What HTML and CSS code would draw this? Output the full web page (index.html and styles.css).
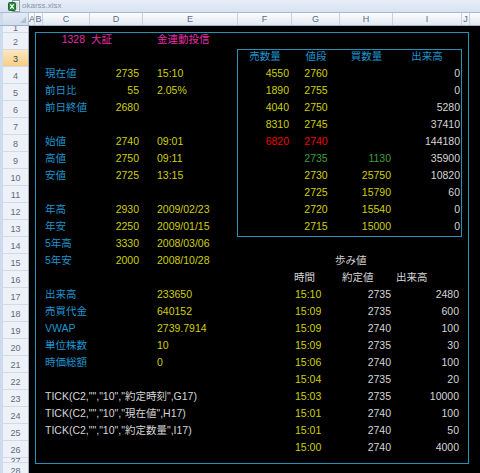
FILE: index.html
```html
<!DOCTYPE html>
<html lang="ja">
<head>
<meta charset="utf-8">
<title>okarss.xlsx</title>
<link rel="stylesheet" href="styles.css">
</head>
<body>
<div class="window">
  <div class="titlebar">
    <svg class="xlicon" viewBox="0 0 12 12" aria-hidden="true">
      <rect x="4.5" y="0.5" width="7" height="11" fill="#ffffff" stroke="#8a9bb0"/>
      <path d="M7.5 3h3M7.5 5h3M7.5 7h3M7.5 9h3" stroke="#7fb08a" stroke-width="0.8"/>
      <rect x="0.5" y="2.5" width="7" height="8" rx="1" fill="#2d8a3e" stroke="#1d6a2c"/>
      <path d="M2.3 4.3l3.4 4.4M5.7 4.3l-3.4 4.4" stroke="#ffffff" stroke-width="1.3"/>
    </svg>
    <span class="title">okarss.xlsx</span>
  </div>

  <div class="colheads">
    <div class="corner"><span class="tri"></span></div>
    <div class="ch">A</div>
    <div class="ch">B</div>
    <div class="ch">C</div>
    <div class="ch">D</div>
    <div class="ch">E</div>
    <div class="ch">F</div>
    <div class="ch">G</div>
    <div class="ch">H</div>
    <div class="ch">I</div>
    <div class="ch">J</div>
    <div class="ch last"></div>
  </div>

  <div class="main">
    <div class="rowheads">
      <div class="rh r1">1</div>
      <div class="rh">2</div>
      <div class="rh active">3</div>
      <div class="rh">4</div>
      <div class="rh">5</div>
      <div class="rh">6</div>
      <div class="rh">7</div>
      <div class="rh">8</div>
      <div class="rh">9</div>
      <div class="rh">10</div>
      <div class="rh">11</div>
      <div class="rh">12</div>
      <div class="rh">13</div>
      <div class="rh">14</div>
      <div class="rh">15</div>
      <div class="rh">16</div>
      <div class="rh">17</div>
      <div class="rh">18</div>
      <div class="rh">19</div>
      <div class="rh">20</div>
      <div class="rh">21</div>
      <div class="rh">22</div>
      <div class="rh">23</div>
      <div class="rh">24</div>
      <div class="rh">25</div>
      <div class="rh">26</div>
      <div class="rh r27">27</div>
      <div class="rh r28">28</div>
    </div>

    <div class="sheet">
      <div class="panel">
        <div class="body">
          <div class="left">
            <div class="row"><span class="c mag code">1328</span><span class="d mag mkt">大証</span><span class="e mag">金連動投信</span></div>
            <div class="row"></div>
            <div class="row"><span class="c lbl">現在値</span><span class="d num">2735</span><span class="e num">15:10</span></div>
            <div class="row"><span class="c lbl">前日比</span><span class="d num">55</span><span class="e num">2.05%</span></div>
            <div class="row"><span class="c lbl">前日終値</span><span class="d num">2680</span></div>
            <div class="row"></div>
            <div class="row"><span class="c lbl">始値</span><span class="d num">2740</span><span class="e num">09:01</span></div>
            <div class="row"><span class="c lbl">高値</span><span class="d num">2750</span><span class="e num">09:11</span></div>
            <div class="row"><span class="c lbl">安値</span><span class="d num">2725</span><span class="e num">13:15</span></div>
            <div class="row"></div>
            <div class="row"><span class="c lbl">年高</span><span class="d num">2930</span><span class="e num">2009/02/23</span></div>
            <div class="row"><span class="c lbl">年安</span><span class="d num">2250</span><span class="e num">2009/01/15</span></div>
            <div class="row"><span class="c lbl">5年高</span><span class="d num">3330</span><span class="e num">2008/03/06</span></div>
            <div class="row"><span class="c lbl">5年安</span><span class="d num">2000</span><span class="e num">2008/10/28</span></div>
            <div class="row"></div>
            <div class="row"><span class="c lbl">出来高</span><span class="e num">233650</span></div>
            <div class="row"><span class="c lbl">売買代金</span><span class="e num">640152</span></div>
            <div class="row"><span class="c lbl">VWAP</span><span class="e num">2739.7914</span></div>
            <div class="row"><span class="c lbl">単位株数</span><span class="e num">10</span></div>
            <div class="row"><span class="c lbl">時価総額</span><span class="e num">0</span></div>
            <div class="row"></div>
            <div class="row"><span class="span wht">TICK(C2,"","10","約定時刻",G17)</span></div>
            <div class="row"><span class="span wht">TICK(C2,"","10","現在値",H17)</span></div>
            <div class="row"><span class="span wht">TICK(C2,"","10","約定数量",I17)</span></div>
          </div>

          <div class="right">
            <div class="rspacer"></div>
            <div class="book">
              <div class="row hd"><span class="f lbl">売数量</span><span class="g lbl">値段</span><span class="h lbl">買数量</span><span class="i lbl">出来高</span></div>
              <div class="row"><span class="f num">4550</span><span class="g num">2760</span><span class="i wht">0</span></div>
              <div class="row"><span class="f num">1890</span><span class="g num">2755</span><span class="i wht">0</span></div>
              <div class="row"><span class="f num">4040</span><span class="g num">2750</span><span class="i wht">5280</span></div>
              <div class="row"><span class="f num">8310</span><span class="g num">2745</span><span class="i wht">37410</span></div>
              <div class="row"><span class="f red">6820</span><span class="g red">2740</span><span class="i wht">144180</span></div>
              <div class="row"><span class="g grn">2735</span><span class="h grn">1130</span><span class="i wht">35900</span></div>
              <div class="row"><span class="g num">2730</span><span class="h num">25750</span><span class="i wht">10820</span></div>
              <div class="row"><span class="g num">2725</span><span class="h num">15790</span><span class="i wht">60</span></div>
              <div class="row"><span class="g num">2720</span><span class="h num">15540</span><span class="i wht">0</span></div>
              <div class="row"><span class="g num">2715</span><span class="h num">15000</span><span class="i wht">0</span></div>
            </div>

            <div class="ticks">
              <div class="row"></div>
              <div class="row caption"><span class="wht">歩み値</span></div>
              <div class="row thd"><span class="tg wht">時間</span><span class="th wht">約定値</span><span class="ti wht">出来高</span></div>
              <div class="row"><span class="tg num">15:10</span><span class="th wht">2735</span><span class="ti wht">2480</span></div>
              <div class="row"><span class="tg num">15:09</span><span class="th wht">2735</span><span class="ti wht">600</span></div>
              <div class="row"><span class="tg num">15:09</span><span class="th wht">2740</span><span class="ti wht">100</span></div>
              <div class="row"><span class="tg num">15:09</span><span class="th wht">2735</span><span class="ti wht">30</span></div>
              <div class="row"><span class="tg num">15:06</span><span class="th wht">2740</span><span class="ti wht">100</span></div>
              <div class="row"><span class="tg num">15:04</span><span class="th wht">2735</span><span class="ti wht">20</span></div>
              <div class="row"><span class="tg num">15:03</span><span class="th wht">2735</span><span class="ti wht">10000</span></div>
              <div class="row"><span class="tg num">15:01</span><span class="th wht">2740</span><span class="ti wht">100</span></div>
              <div class="row"><span class="tg num">15:01</span><span class="th wht">2740</span><span class="ti wht">50</span></div>
              <div class="row"><span class="tg num">15:00</span><span class="th wht">2740</span><span class="ti wht">4000</span></div>
            </div>
          </div>
        </div>
      </div>
    </div>
  </div>
</div>
</body>
</html>
```

FILE: styles.css
```css
* { box-sizing: border-box; }

html, body {
  margin: 0;
  padding: 0;
}

body {
  width: 480px;
  height: 473px;
  overflow: hidden;
  background: #000;
  font-family: "Liberation Sans", "Noto Sans CJK JP", sans-serif;
}

.window {
  width: 480px;
  height: 473px;
  display: flex;
  flex-direction: column;
  overflow: hidden;
}

/* title bar */
.titlebar {
  height: 13px;
  flex: none;
  display: flex;
  align-items: center;
  gap: 2px;
  padding-left: 8px;
  background: linear-gradient(#e8eef8, #d7e2f2);
  border-bottom: 1px solid #a9bad2;
}

.xlicon {
  width: 12px;
  height: 12px;
  display: block;
}

.title {
  font-size: 8px;
  line-height: 10px;
  color: #8a96a9;
}

/* column headers */
.colheads {
  height: 13px;
  flex: none;
  display: grid;
  grid-template-columns: 29px 6px 8px 47px 53px 95px 54px 48px 53px 69px 8px 10px;
  background: linear-gradient(#fbfcfe, #e2e8f1);
  border-bottom: 1px solid #9fb1c9;
}

.corner {
  background: linear-gradient(#e4ebf5, #d2dcec);
  border-left: 3px solid #cddbee;
  border-right: 1px solid #b4c3d7;
  display: flex;
  align-items: flex-end;
  justify-content: flex-end;
  padding: 0 2px 2px 0;
}

.tri {
  width: 0;
  height: 0;
  border-left: 6px solid transparent;
  border-bottom: 6px solid #b3bfce;
}

.ch {
  font-size: 9px;
  line-height: 12px;
  color: #5a6a83;
  text-align: center;
  border-right: 1px solid #c6d0de;
  overflow: hidden;
}

.ch.last { border-right: 0; }

/* main */
.main {
  flex: 1;
  display: flex;
  min-height: 0;
}

.rowheads {
  width: 29px;
  flex: none;
  background: #eef2f8;
  border-left: 3px solid #cddbee;
  border-right: 1px solid #9fb1c9;
  overflow: hidden;
}

.rh {
  height: 17px;
  border-bottom: 1px solid #d2dae6;
  font-size: 9px;
  line-height: 11px;
  padding-top: 4px;
  color: #5a6a83;
  text-align: center;
  overflow: hidden;
}

.rh.r1 {
  height: 7px;
  padding-top: 0;
  line-height: 4px;
}

.rh.active {
  background: linear-gradient(#fde7c0, #f7cd85);
  color: #3e4650;
}

.rh.r27 {
  height: 5px;
  padding-top: 0;
  line-height: 7px;
}

.rh.r28 {
  height: 12px;
  padding-top: 3px;
}

.sheet {
  flex: 1;
  background: #000;
  padding: 6px 0 0 6px;
}

.panel {
  width: 434px;
  height: 432px;
  border: 1px solid #2690b6;
}

.body {
  display: flex;
}

.left {
  width: 201px;
  flex: none;
  padding-left: 7px;
}

.right {
  width: 231px;
  flex: none;
}

.row {
  height: 17px;
  display: grid;
  font-size: 10.5px;
  line-height: 13px;
  white-space: nowrap;
}

/* left block */
.left .row { grid-template-columns: 47px 53px 94px; }
.left .c { grid-column: 1; padding-left: 2px; }
.left .d { grid-column: 2; text-align: right; padding-right: 4px; }
.left .e { grid-column: 3; padding-left: 14px; }
.left .c.code { text-align: right; padding-right: 5px; padding-left: 0; }
.left .d.mkt { text-align: left; padding-left: 1px; padding-right: 0; }
.left .span { grid-column: 1 / -1; padding-left: 2px; }

/* order book */
.rspacer { height: 16px; }

.book {
  width: 225px;
  height: 188px;
  border: 1px solid #2690b6;
}

.book .row { grid-template-columns: 54px 48px 53px 68px; }
.book .f { grid-column: 1; text-align: right; padding-right: 3px; }
.book .g { grid-column: 2; text-align: center; }
.book .h { grid-column: 3; text-align: right; padding-right: 2px; }
.book .i { grid-column: 4; text-align: right; padding-right: 1px; }
.book .hd > span { text-align: center; padding: 0; }

/* time & sales */
.ticks .row { grid-template-columns: 55px 48px 53px 69px; }
.ticks .tg { grid-column: 2; padding-left: 3px; }
.ticks .th { grid-column: 3; text-align: right; padding-right: 2px; }
.ticks .ti { grid-column: 4; text-align: right; padding-right: 3px; }
.ticks .thd .tg { padding-left: 2px; }
.ticks .thd .th { text-align: left; padding-left: 2px; padding-right: 0; }
.ticks .thd .ti { text-align: left; padding-left: 3px; padding-right: 0; }
.ticks .caption { display: block; padding-left: 98px; }

/* colours */
.lbl { color: #1f94cd; }
.num { color: #cfcf0a; }
.wht { color: #d6d6d6; }
.mag { color: #e52ca5; }
.grn { color: #3b9f3b; }
.red { color: #f00000; }
```
